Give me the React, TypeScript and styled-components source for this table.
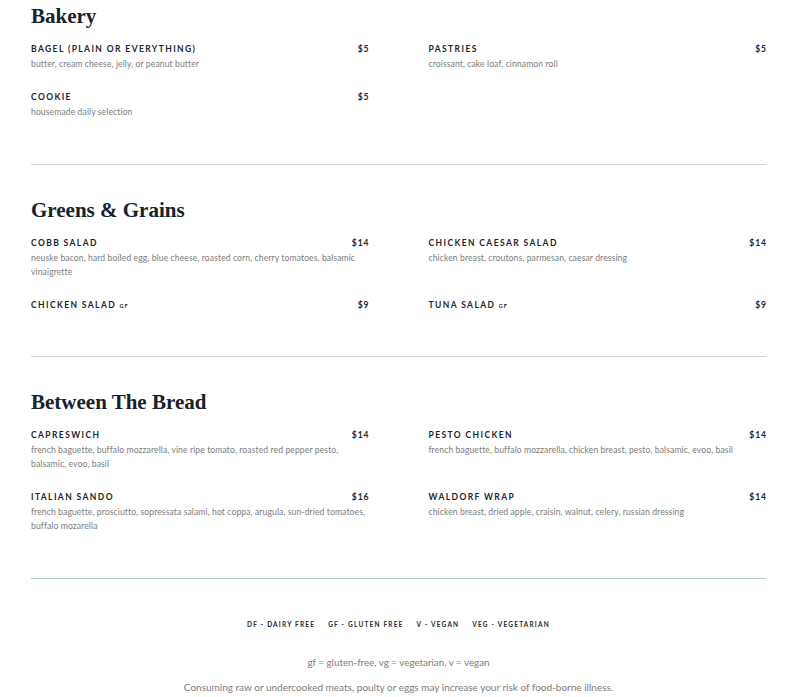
import React, { FC } from 'react';
import styled, { createGlobalStyle } from 'styled-components';

const GlobalStyle = createGlobalStyle`
	body {
		margin: 0;
		background: #ffffff;
		font-family: 'Lato', 'Liberation Sans', sans-serif;
	}
`;

const Root = styled.div`
	padding: 4px 34px 0 31px;
`;

const Section = styled.section<{ $last?: boolean }>`
	padding-bottom: 25px;
	border-bottom: 1px solid ${(p) => (p.$last ? '#b6cbc9' : '#d2d2d2')};
	& + & {
		padding-top: 33px;
	}
`;

const Title = styled.h2`
	margin: 0 0 14px;
	font-family: 'Liberation Serif', serif;
	font-weight: bold;
	font-size: 21px;
	line-height: 25px;
	color: #17222a;
`;

const Grid = styled.div`
	display: grid;
	grid-template-columns: 1fr 1fr;
	column-gap: 60px;
`;

const Item = styled.div`
	margin-bottom: 20px;
`;

const NameRow = styled.div`
	display: flex;
	justify-content: space-between;
	align-items: center;
	height: 12px;
	font-size: 8.5px;
	line-height: 12px;
	font-weight: bold;
	letter-spacing: 1.4px;
	color: #1b252c;
`;

const Tag = styled.span`
	font-size: 5.5px;
	line-height: 0;
	letter-spacing: 1px;
	margin-left: 1px;
`;

const Price = styled.span`
	letter-spacing: 1px;
	margin-right: -1px;
`;

const Desc = styled.p`
	margin: 2px 0 0;
	font-size: 8.6px;
	line-height: 14px;
	color: #7c7c7c;
	letter-spacing: 0.1px;
`;

const Footer = styled.div`
	display: flex;
	flex-direction: column;
	align-items: center;
	padding-top: 40px;
`;

const Legend = styled.div`
	display: flex;
	column-gap: 13px;
	font-size: 6.5px;
	font-weight: bold;
	letter-spacing: 1.2px;
	color: #1f2a31;
	line-height: 12px;
`;

const Note = styled.p<{ $size: number; $gap: number }>`
	margin: ${(p) => p.$gap}px 0 0;
	font-size: ${(p) => p.$size}px;
	color: #7d7d7d;
	line-height: 14px;
`;

type MenuItem = { name: string; price: string; desc?: string; tag?: string };

const sections: { title: string; items: MenuItem[] }[] = [
	{
		title: 'Bakery',
		items: [
			{ name: 'Bagel (Plain or Everything)', price: '$5', desc: 'butter, cream cheese, jelly, or peanut butter' },
			{ name: 'Pastries', price: '$5', desc: 'croissant, cake loaf, cinnamon roll' },
			{ name: 'Cookie', price: '$5', desc: 'housemade daily selection' },
		],
	},
	{
		title: 'Greens & Grains',
		items: [
			{
				name: 'Cobb Salad',
				price: '$14',
				desc: 'neuske bacon, hard boiled egg, blue cheese, roasted corn, cherry tomatoes, balsamic vinaigrette',
			},
			{ name: 'Chicken Caesar Salad', price: '$14', desc: 'chicken breast, croutons, parmesan, caesar dressing' },
			{ name: 'Chicken Salad', price: '$9', tag: 'GF' },
			{ name: 'Tuna Salad', price: '$9', tag: 'GF' },
		],
	},
	{
		title: 'Between The Bread',
		items: [
			{
				name: 'Capreswich',
				price: '$14',
				desc: 'french baguette, buffalo mozzarella, vine ripe tomato, roasted red pepper pesto, balsamic, evoo, basil',
			},
			{
				name: 'Pesto Chicken',
				price: '$14',
				desc: 'french baguette, buffalo mozzarella, chicken breast, pesto, balsamic, evoo, basil',
			},
			{
				name: 'Italian Sando',
				price: '$16',
				desc: 'french baguette, prosciutto, sopressata salami, hot coppa, arugula, sun-dried tomatoes, buffalo mozarella',
			},
			{ name: 'Waldorf Wrap', price: '$14', desc: 'chicken breast, dried apple, craisin, walnut, celery, russian dressing' },
		],
	},
];

const App: FC = () => {
	return (
		<Root>
			<GlobalStyle />
			{sections.map((s, i) => (
				<Section key={s.title} $last={i === sections.length - 1}>
					<Title>{s.title}</Title>
					<Grid>
						{s.items.map((it) => (
							<Item key={it.name}>
								<NameRow>
									<span>
										{it.name.toUpperCase()}
										{it.tag && <Tag> {it.tag}</Tag>}
									</span>
									<Price>{it.price}</Price>
								</NameRow>
								{it.desc && <Desc>{it.desc}</Desc>}
							</Item>
						))}
					</Grid>
				</Section>
			))}
			<Footer>
				<Legend>
					<span>DF - DAIRY FREE</span>
					<span>GF - GLUTEN FREE</span>
					<span>V - VEGAN</span>
					<span>VEG - VEGETARIAN</span>
				</Legend>
				<Note $size={9.8} $gap={24}>
					gf = gluten-free, vg = vegetarian, v = vegan
				</Note>
				<Note $size={10} $gap={11}>
					Consuming raw or undercooked meats, poulty or eggs may increase your risk of food-borne illness.
				</Note>
			</Footer>
		</Root>
	);
};

export default App;
